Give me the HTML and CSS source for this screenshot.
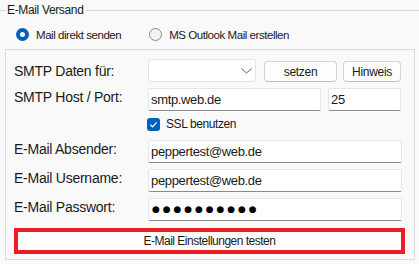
FILE: index.html
```html
<!DOCTYPE html>
<html lang="de">
<head>
    <meta charset="UTF-8">
    <title>E-Mail Versand</title>
    <link rel="stylesheet" href="styles.css">
</head>
<body>
    <div class="group-title"><span>E-Mail Versand</span></div>
    <div class="radios">
        <label class="radio"><span class="dot checked"></span>Mail direkt senden</label>
        <label class="radio"><span class="dot"></span>MS Outlook Mail erstellen</label>
    </div>
    <div class="panel">
        <div class="label">SMTP Daten für:</div>
        <div class="row first">
            <div class="combo">
                <svg width="11" height="6" viewBox="0 0 11 6"><polyline points="0.5,0.5 5.5,5 10.5,0.5" fill="none" stroke="#606060" stroke-width="1"/></svg>
            </div>
            <div class="btn setzen">setzen</div>
            <div class="btn hinweis">Hinweis</div>
        </div>

        <div class="label">SMTP Host / Port:</div>
        <div class="row">
            <div class="input host">smtp.web.de</div>
            <div class="input port">25</div>
        </div>

        <div></div>
        <div class="check-row">
            <span class="check">
                <svg width="13" height="13" viewBox="0 0 13 13"><polyline points="3.5,6.8 5.6,8.8 9.6,4.4" fill="none" stroke="#fff" stroke-width="1.2"/></svg>
            </span>
            SSL benutzen
        </div>

        <div class="label">E-Mail Absender:</div>
        <div class="input wide">peppertest@web.de</div>

        <div class="label">E-Mail Username:</div>
        <div class="input wide">peppertest@web.de</div>

        <div class="label">E-Mail Passwort:</div>
        <div class="input wide pass">●●●●●●●●●●</div>

        <div class="test">E-Mail Einstellungen testen</div>
    </div>
</body>
</html>
```

FILE: styles.css
```css
body {
    margin: 0;
    width: 419px;
    height: 264px;
    background-color: #f9f9f9;
    font-family: "Liberation Sans", Arial, sans-serif;
    color: #1a1a1a;
    overflow: hidden;
}
.group-title {
    display: flex;
    align-items: center;
    height: 20px;
    font-size: 12px;
    letter-spacing: -0.35px;
}
.group-title::before {
    content: "";
    width: 6px;
    border-top: 1px solid #dcdcdc;
}
.group-title::after {
    content: "";
    flex: 1;
    border-top: 1px solid #dcdcdc;
}
.group-title span {
    padding: 0 3px 1px 1px;
}
.radios {
    display: flex;
    align-items: center;
    height: 29px;
    padding-left: 16px;
    font-size: 11.5px;
    letter-spacing: -0.45px;
}
.radio {
    display: flex;
    align-items: center;
    gap: 7px;
}
.radio + .radio {
    margin-left: 28px;
}
.dot {
    box-sizing: border-box;
    width: 13px;
    height: 13px;
    border-radius: 50%;
    border: 1px solid #8a8a8a;
    background-color: #f3f3f3;
}
.dot.checked {
    border: 4px solid #005fb8;
    background-color: #fff;
}
.panel {
    box-sizing: border-box;
    margin-left: 5px;
    width: 410px;
    height: 211px;
    border: 1px solid #dcdcdc;
    padding: 9px 0 0 8px;
    display: grid;
    grid-template-columns: 134px 254px;
    grid-auto-rows: auto;
    align-content: start;
    align-items: center;
}
.label {
    font-size: 14px;
    letter-spacing: -0.25px;
}
.row {
    display: flex;
    align-items: center;
}
.combo {
    box-sizing: border-box;
    width: 108px;
    height: 23px;
    background-color: #fff;
    border: 1px solid #e3e3e3;
    border-radius: 3px;
    display: flex;
    align-items: center;
    justify-content: flex-end;
    padding-right: 3px;
}
.btn {
    box-sizing: border-box;
    height: 21px;
    background-color: #fdfdfd;
    border: 1px solid #d3d3d3;
    border-bottom-color: #c0c0c0;
    border-radius: 4px;
    font-size: 12px;
    letter-spacing: -0.3px;
    display: flex;
    align-items: center;
    justify-content: center;
    margin-top: 2px;
}
.setzen {
    width: 73px;
    margin-left: 8px;
}
.hinweis {
    width: 58px;
    margin-left: 6px;
}
.input {
    box-sizing: border-box;
    height: 23px;
    background-color: #fff;
    border: 1px solid #e6e6e6;
    border-bottom: 1px solid #8a8a8a;
    border-radius: 2px;
    padding-left: 2px;
    font-size: 13px;
    letter-spacing: -0.35px;
    line-height: 21px;
}
.host {
    width: 173px;
}
.port {
    width: 73px;
    margin-left: 7px;
}
.wide {
    width: 254px;
}
.row,
.check-row,
.wide {
    margin-top: 6px;
}
.row.first {
    margin-top: 0;
}
.check-row {
    display: flex;
    align-items: center;
    gap: 6px;
    height: 14px;
    font-size: 12px;
    letter-spacing: -0.4px;
    margin-left: -1px;
    margin-bottom: 3px;
}
.check {
    width: 13px;
    height: 13px;
    border-radius: 3px;
    background-color: #005fb8;
    display: flex;
}
.pass {
    font-family: "DejaVu Sans", sans-serif;
    font-size: 9px;
    letter-spacing: 2.9px;
    padding-left: 3px;
    color: #000;
}
.test {
    grid-column: 1 / 3;
    box-sizing: border-box;
    width: 391px;
    height: 26px;
    margin-top: 7px;
    border: 4px solid #ed1c24;
    background-color: #fdfdfd;
    font-size: 12px;
    letter-spacing: -0.5px;
    display: flex;
    align-items: center;
    justify-content: center;
}
```
